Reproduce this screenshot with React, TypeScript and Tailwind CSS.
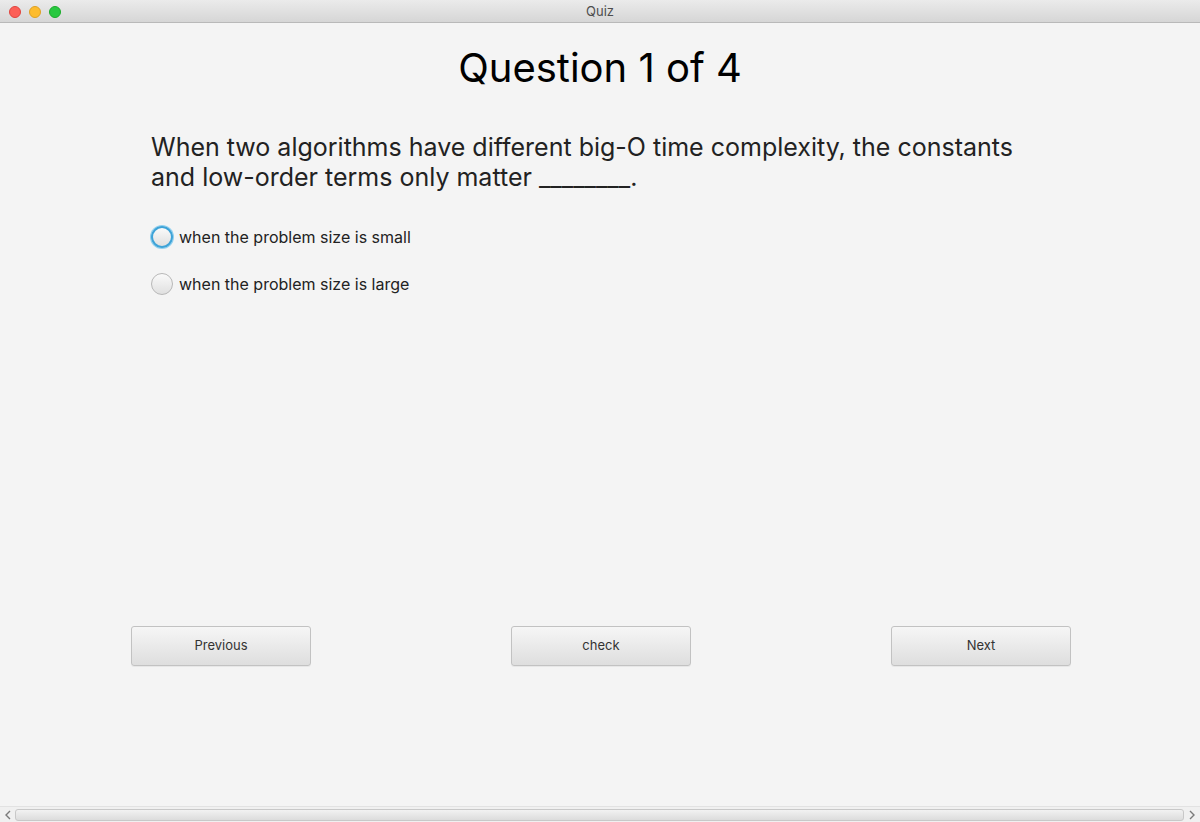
import React from "react";

const options = ["when the problem size is small", "when the problem size is large"];

function Radio({ focused }: { focused?: boolean }) {
    return (
        <div
            className={
                "w-[22px] h-[22px] rounded-full bg-gradient-to-b from-[#fafafa] to-[#e0e0e0] " +
                (focused ? "border-2 border-[#3da3d8] ring-1 ring-[#8fd0f0]" : "border border-[#b8b8b8]")
            }
        />
    );
}

function QuizButton({ label }: { label: string }) {
    return (
        <button className="w-[180px] h-[40px] rounded-[3px] border border-[#c2c2c2] bg-gradient-to-b from-[#f6f6f6] to-[#dedede] text-[13px] text-[#333] shadow-[0_1px_0_rgba(0,0,0,0.05)]">
            {label}
        </button>
    );
}

function Chevron({ dir }: { dir: "left" | "right" }) {
    return (
        <svg width="6" height="10" viewBox="0 0 6 10" fill="none" stroke="#7a7a7a" strokeWidth="1.4">
            {dir === "left" ? <path d="M5 1 L1 5 L5 9" /> : <path d="M1 1 L5 5 L1 9" />}
        </svg>
    );
}

export default function App() {
    return (
        <div className="w-[1200px] h-[822px] flex flex-col bg-[#f4f4f4] overflow-hidden" style={{ fontFamily: "Inter, 'Noto Sans', sans-serif" }}>
            {/* title bar */}
            <div className="h-[23px] shrink-0 flex items-center relative bg-gradient-to-b from-[#ebebeb] to-[#d6d6d6] border-b border-[#b9b9b9]">
                <div className="flex gap-2 pl-[9px] pt-[1px]">
                    <div className="w-3 h-3 rounded-full bg-[#fc5f57] border border-[#e0443e]" />
                    <div className="w-3 h-3 rounded-full bg-[#fdbc2e] border border-[#dea123]" />
                    <div className="w-3 h-3 rounded-full bg-[#28c840] border border-[#1aab29]" />
                </div>
                <div className="absolute inset-0 pt-[2px] flex items-center justify-center text-[13px] text-[#4d4d4d]">Quiz</div>
            </div>

            <div className="flex-1 flex flex-col">
                <h1 className="text-center text-[40px] leading-none text-black mt-[20px] h-[50px] flex items-center justify-center">
                    Question 1 of 4
                </h1>

                <p className="pl-[151px] mt-[39px] text-[25px] leading-[30px] text-[#222]">
                    When two algorithms have different big-O time complexity, the constants
                    <br />
                    and low-order terms only matter ________.
                </p>

                <div className="pl-[151px] mt-[33px] flex flex-col gap-[23px]">
                    {options.map((o, i) => (
                        <label key={o} className="flex items-center gap-[6px] text-[16px] text-[#222]">
                            <Radio focused={i === 0} />
                            <span>{o}</span>
                        </label>
                    ))}
                </div>

                <div className="mt-auto mb-[140px] pl-[131px] flex gap-[200px]">
                    <QuizButton label="Previous" />
                    <QuizButton label="check" />
                    <QuizButton label="Next" />
                </div>
            </div>

            {/* horizontal scrollbar */}
            <div className="h-[16px] shrink-0 flex items-center bg-[#f0f0f0] border-t border-[#e2e2e2]">
                <div className="w-[15px] flex justify-center">
                    <Chevron dir="left" />
                </div>
                <div className="flex-1 h-[12px] rounded-[3px] border border-[#c8c8c8] bg-gradient-to-b from-[#f2f2f2] to-[#dcdcdc]" />
                <div className="w-[16px] flex justify-center">
                    <Chevron dir="right" />
                </div>
            </div>
        </div>
    );
}
